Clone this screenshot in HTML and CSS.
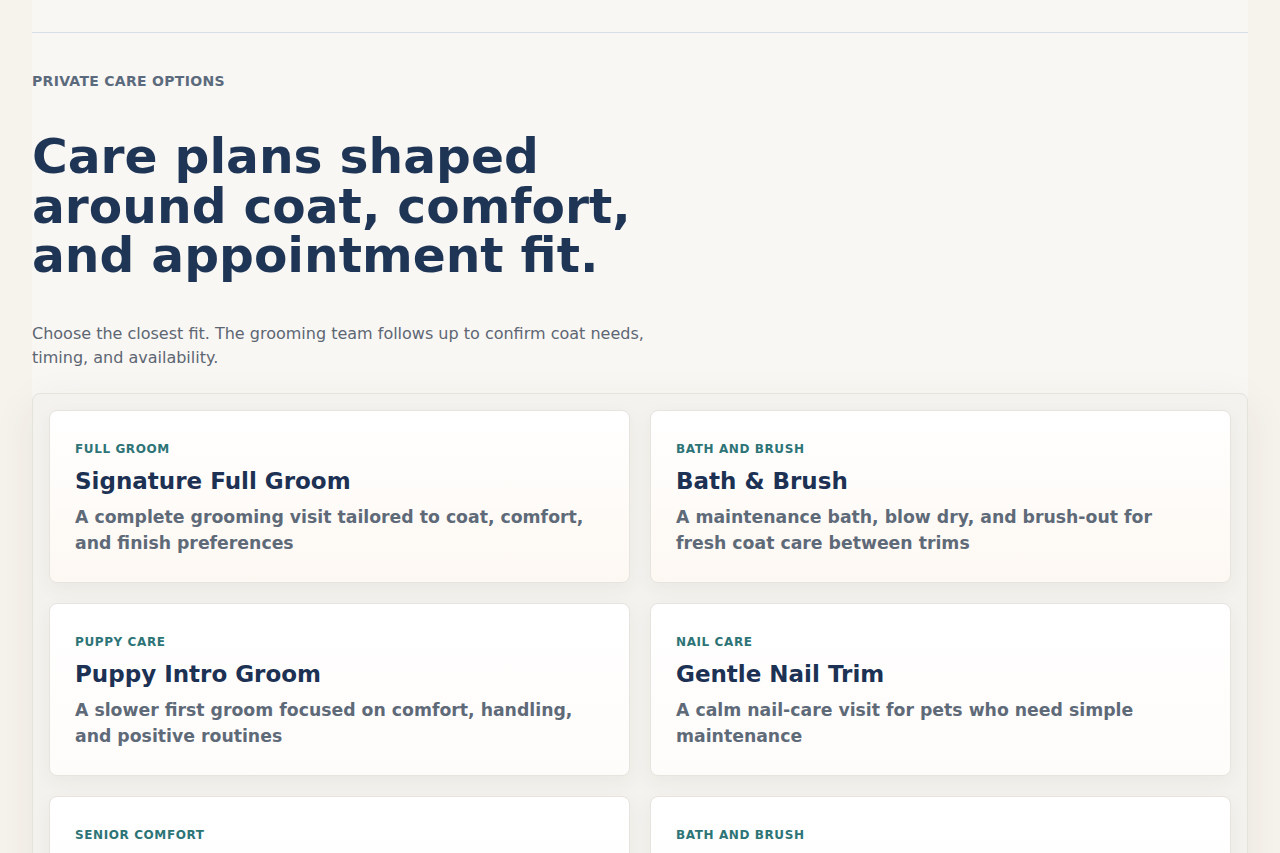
FILE: index.html
```html
<!DOCTYPE html>
<html lang="en">
<head>
  <meta charset="UTF-8" />
  <title>Private care options</title>
  <link rel="stylesheet" href="styles.css">
</head>
<body>

<div class="page">
  <div class="topbar"></div>

  <section class="intro">
    <p class="eyebrow">Private care options</p>
    <h1>Care plans shaped around coat, comfort, and appointment fit.</h1>
    <p class="lead">Choose the closest fit. The grooming team follows up to confirm coat needs, timing, and availability.</p>
  </section>

  <div class="plans">
    <div class="plan warm">
      <p class="plan-tag">Full groom</p>
      <h2>Signature Full Groom</h2>
      <p class="plan-desc">A complete grooming visit tailored to coat, comfort, and finish preferences</p>
    </div>
    <div class="plan warm">
      <p class="plan-tag">Bath and brush</p>
      <h2>Bath &amp; Brush</h2>
      <p class="plan-desc">A maintenance bath, blow dry, and brush-out for fresh coat care between trims</p>
    </div>
    <div class="plan">
      <p class="plan-tag">Puppy care</p>
      <h2>Puppy Intro Groom</h2>
      <p class="plan-desc">A slower first groom focused on comfort, handling, and positive routines</p>
    </div>
    <div class="plan">
      <p class="plan-tag">Nail care</p>
      <h2>Gentle Nail Trim</h2>
      <p class="plan-desc">A calm nail-care visit for pets who need simple maintenance</p>
    </div>
    <div class="plan">
      <p class="plan-tag">Senior comfort</p>
      <h2>Senior Comfort Groom</h2>
      <p class="plan-desc">A gentler visit with extra breaks, support, and a pace that suits older pets</p>
    </div>
    <div class="plan">
      <p class="plan-tag">Bath and brush</p>
      <h2>Deshed Treatment</h2>
      <p class="plan-desc">A bath and brush-out focused on loosening undercoat and reducing shedding</p>
    </div>
  </div>
</div>

</body>
</html>
```

FILE: styles.css
```css
body {
  font-family: "DejaVu Sans", Verdana, sans-serif;
  background: #f6f2ec;
  margin: 0;
  color: #1e3354;
}

.page {
  margin: 0 32px;
  min-height: 100vh;
  background: #f9f7f3;
}

.topbar {
  height: 32px;
  border-bottom: 1px solid #d5e0ea;
}

.intro {
  padding-top: 38px;
}

.eyebrow {
  margin: 0;
  font-size: 14px;
  font-weight: bold;
  letter-spacing: 0.3px;
  text-transform: uppercase;
  color: #5b6b7d;
  line-height: 20px;
}

h1 {
  margin: 41px 0 0;
  max-width: 640px;
  font-size: 48.7px;
  line-height: 49.5px;
  font-weight: bold;
  color: #1f3555;
}

.lead {
  margin: 41px 0 0;
  max-width: 650px;
  font-size: 16px;
  line-height: 24px;
  color: #5d6673;
}

.plans {
  margin-top: 23px;
  padding: 16px;
  display: grid;
  grid-template-columns: 1fr 1fr;
  gap: 20px;
  background: #f3f2ee;
  border: 1px solid #e6e2dc;
  border-radius: 8px;
  box-shadow: 0 12px 44px rgba(60, 50, 40, 0.07);
}

.plan {
  padding: 30px 25px 25px;
  background: linear-gradient(180deg, #ffffff 0%, #fefcfa 100%);
  border: 1px solid #e7e3de;
  border-radius: 8px;
  box-shadow: 0 6px 18px rgba(60, 50, 40, 0.05);
}

.plan.warm {
  background: linear-gradient(180deg, #ffffff 0%, #fdf8f2 100%);
}

.plan-tag {
  margin: 0;
  font-size: 12px;
  line-height: 16px;
  font-weight: bold;
  letter-spacing: 0.6px;
  text-transform: uppercase;
  color: #2d7477;
}

.plan h2 {
  margin: 10px 0 0;
  font-size: 23px;
  line-height: 28px;
  color: #1c3153;
}

.plan-desc {
  margin: 9px 0 0;
  font-size: 17.3px;
  line-height: 26.5px;
  font-weight: bold;
  color: #5f6a79;
}
```
